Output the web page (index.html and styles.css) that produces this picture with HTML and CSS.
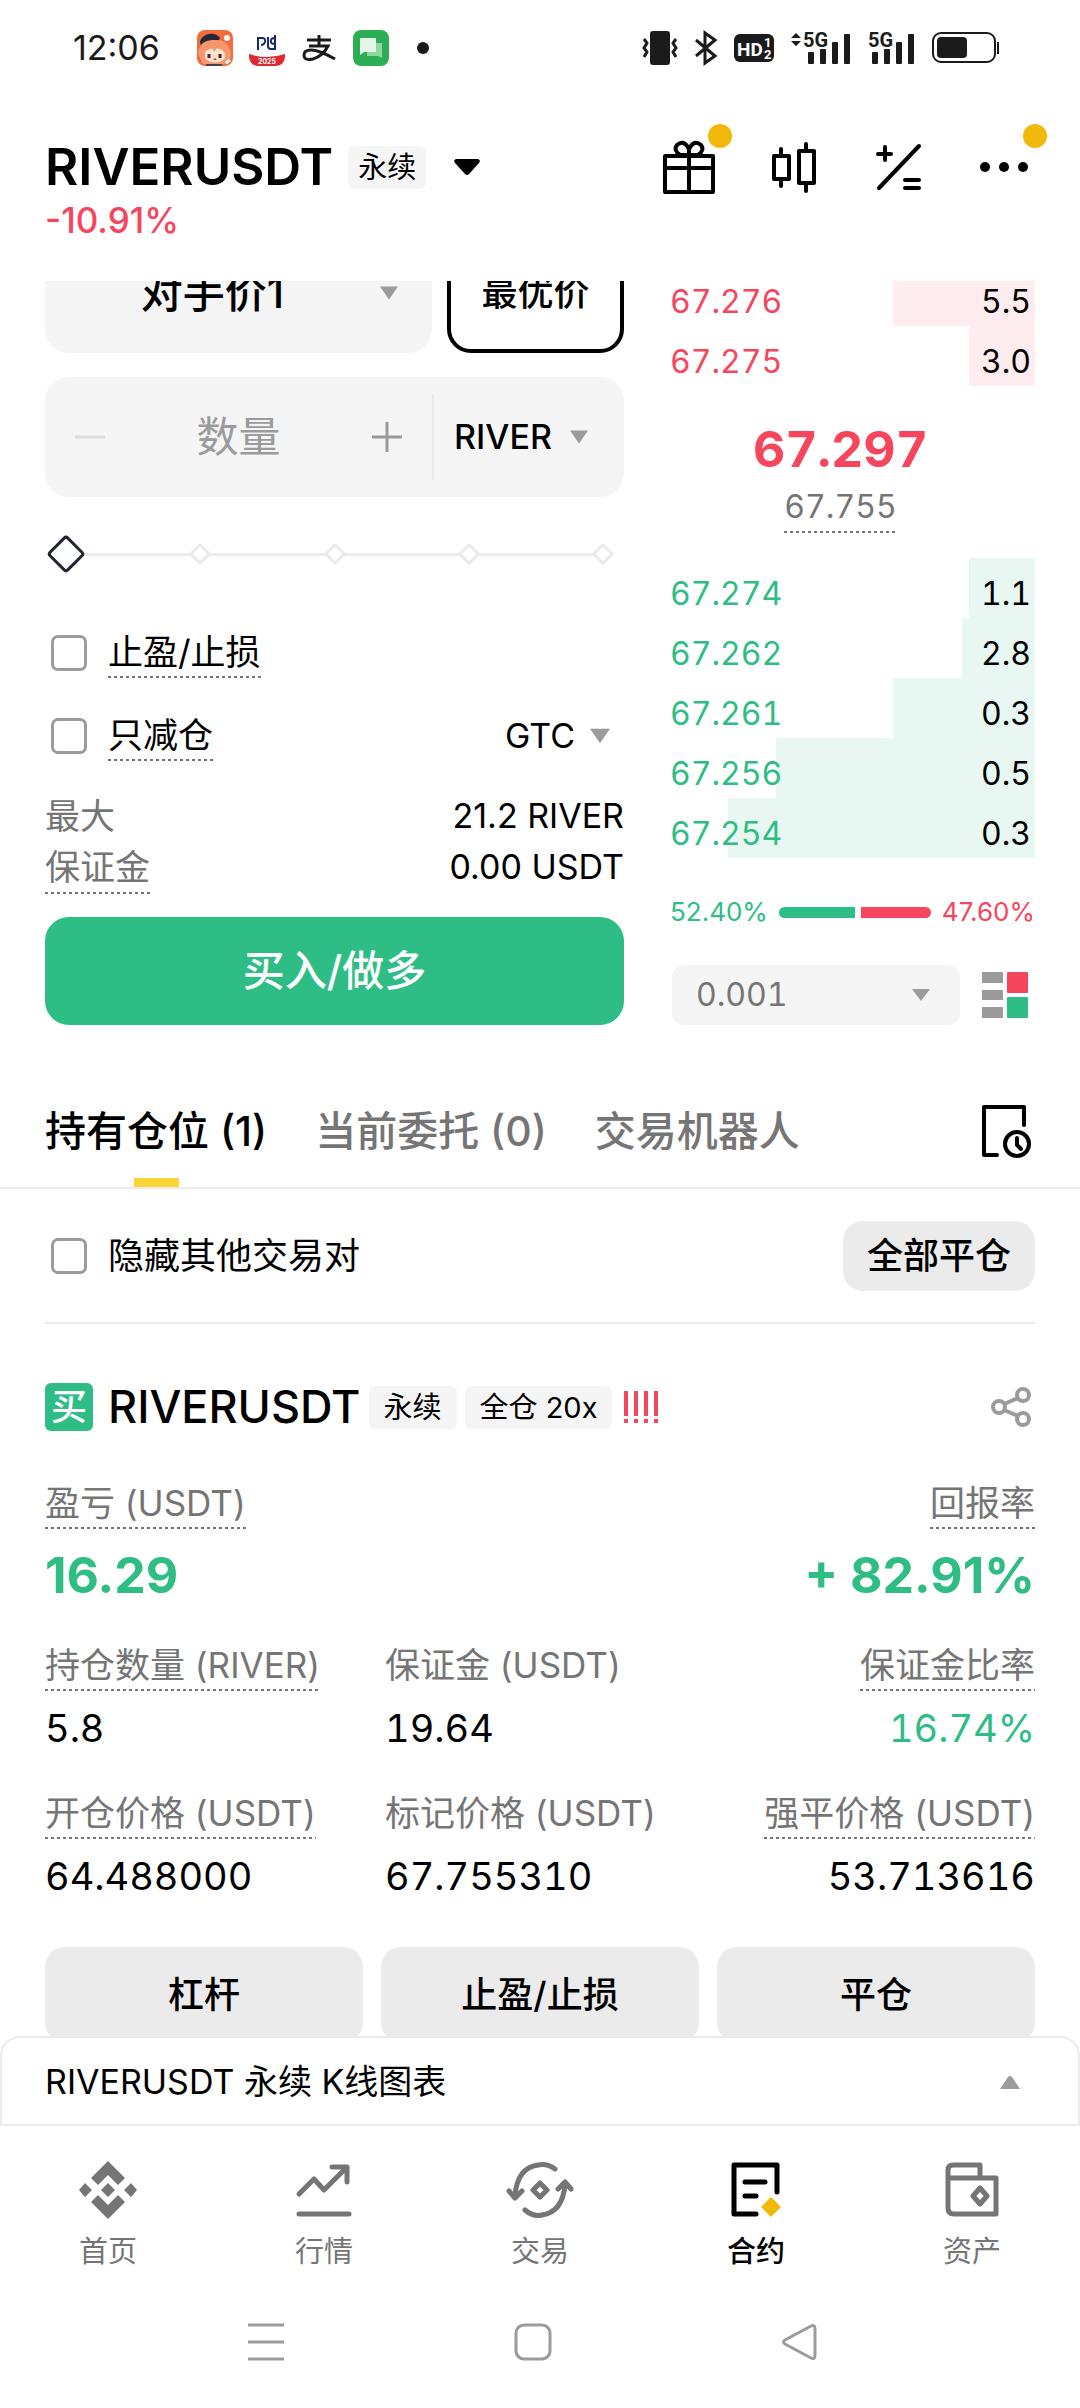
FILE: index.html
```html
<!DOCTYPE html>
<html lang="zh-CN">
<head>
  <meta charset="UTF-8">
  <meta name="viewport" content="width=device-width, initial-scale=1.0">
  <title>RIVERUSDT 永续</title>
  <link rel="stylesheet" href="styles.css">
</head>
<body>
  <div class="status-bar">
    <span class="clock">12:06</span>
    <div class="status-apps">
      <svg width="36" height="36" viewBox="0 0 36 36">
        <rect width="36" height="36" rx="8" fill="#f46b3c"/>
        <path d="M3 12C4 4 18 0 23 8L20 14L4 16Z" fill="#25283c"/>
        <circle cx="30" cy="8" r="3" fill="#fff"/>
        <path d="M1 24C2 12 10 10 18 10C28 9 34 16 34 26L30 34H6Z" fill="#f7976b"/>
        <path d="M8 22C12 17 24 17 28 22V28C24 34 12 34 8 28Z" fill="#fde3cf"/>
        <path d="M6 24L14 14L17 22L22 15L29 25L31 16L18 10L7 15Z" fill="#f7976b"/>
        <path d="M12 24v4M23 24v4" stroke="#4a2430" stroke-width="3"/>
        <path d="M16 30l2-2 2 2z" fill="#c43d38"/>
        <path d="M9 34h16v2H9z" fill="#45414b"/>
        <path d="M29 33l4-3" stroke="#fff" stroke-width="3"/>
      </svg>
      <svg width="36" height="36" viewBox="0 0 36 36">
        <path d="M9 20V8H13Q17 8 16 12Q15 15 12 15M19 7V16Q19 19 22 19H26V5M26 8Q21 8 22 12Q22 14 26 14" fill="none" stroke="#15296b" stroke-width="2"/>
        <path d="M0 24Q18 30 36 24V27Q35 36 26 36H10Q1 36 0 27Z" fill="#df2932"/>
        <text x="18" y="34" text-anchor="middle" font-size="7" font-weight="700" fill="#fff">2025</text>
      </svg>
      <svg width="36" height="36" viewBox="0 0 36 36" fill="none" stroke="#1b1b1b" stroke-width="3">
        <path d="M6 10H30M18 5V16M8 16H27Q22 26 12 29Q3 31 3 25Q3 20 10 20Q18 20 34 29"/>
      </svg>
      <svg width="36" height="36" viewBox="0 0 36 36">
        <rect width="36" height="36" rx="8" fill="#2cae54"/>
        <path d="M14 13H29V28L25 26H14Z" fill="#8fd6a3"/>
        <path d="M7 8H23V22H11L7 25Z" fill="#e2f5e6"/>
      </svg>
      <svg class="more-dot" width="12" height="12"><circle cx="6" cy="6" r="6" fill="#1b1b1b"/></svg>
    </div>
    <div class="status-system">
      <svg width="36" height="34" viewBox="0 0 36 34" fill="none" stroke="#1b1b1b" stroke-width="3">
        <rect x="8" y="0" width="20" height="34" rx="3" fill="#1b1b1b" stroke="none"/>
        <path d="M2 8l3 4-3 5 3 4-3 5M34 8l-3 4 3 5-3 4 3 5"/>
      </svg>
      <svg width="22" height="34" viewBox="0 0 22 34" fill="none" stroke="#1b1b1b" stroke-width="3">
        <path d="M1 9L20 25L10 32V2L20 9L1 25"/>
      </svg>
      <svg width="40" height="28" viewBox="0 0 40 28">
        <rect width="40" height="28" rx="6" fill="#1b1b1b"/>
        <text x="3" y="22" font-size="19" font-weight="700" font-family="Roboto" fill="#fff">HD</text>
        <text x="30" y="13" font-size="13" font-weight="700" font-family="Roboto" fill="#fff">1</text>
        <text x="30" y="25" font-size="13" font-weight="700" font-family="Roboto" fill="#fff">2</text>
      </svg>
      <svg width="60" height="33" viewBox="0 0 60 33" fill="#1b1b1b">
        <path d="M0 6L5 1L10 6ZM0 9H10L5 14Z"/>
        <text x="12" y="15" font-size="20" font-weight="700" font-family="Roboto">5G</text>
        <rect x="17" y="20" width="6" height="12" rx="1"/><rect x="29" y="17" width="6" height="15" rx="1"/>
        <rect x="41" y="10" width="6" height="22" rx="1"/><rect x="53" y="2" width="6" height="30" rx="1"/>
      </svg>
      <svg width="47" height="33" viewBox="0 0 47 33" fill="#1b1b1b">
        <text x="0" y="15" font-size="20" font-weight="700" font-family="Roboto">5G</text>
        <rect x="4" y="20" width="6" height="12" rx="1"/><rect x="16" y="17" width="6" height="15" rx="1"/>
        <rect x="28" y="10" width="6" height="22" rx="1"/><rect x="40" y="2" width="6" height="30" rx="1"/>
      </svg>
      <svg width="68" height="32" viewBox="0 0 68 32">
        <rect x="1" y="1" width="62" height="29" rx="8" fill="none" stroke="#1b1b1b" stroke-width="2"/>
        <rect x="5" y="5" width="30" height="21" rx="4" fill="#1b1b1b"/>
        <rect x="65" y="10" width="2" height="12" fill="#1b1b1b"/>
      </svg>
    </div>
  </div>

  <header class="header">
    <div>
      <div class="pair">
        <h1>RIVERUSDT</h1>
        <span class="tag">永续</span>
        <svg class="pair-caret" width="26" height="17" viewBox="0 0 26 17"><path d="M2 0H24Q27 1 25 4L15 15Q13 17 11 15L1 4Q-1 1 2 0Z"/></svg>
      </div>
      <div class="change">-10.91%</div>
    </div>
    <div class="header-icons">
      <button aria-label="礼物" class="dotted">
        <svg width="54" height="54" viewBox="0 0 54 54" fill="none" stroke="#000" stroke-width="4" stroke-linejoin="round">
          <rect x="3" y="16" width="48" height="36"/>
          <path d="M3 28H51M27 8V52M27 15H18Q11 10 15 5Q22 -1 27 9Q32 -1 39 5Q43 10 36 15H27"/>
        </svg>
      </button>
      <button aria-label="K线">
        <svg width="54" height="54" viewBox="0 0 54 54" fill="none" stroke="#000" stroke-width="4" stroke-linejoin="round" stroke-linecap="round">
          <rect x="7" y="16" width="15" height="23"/><rect x="32" y="11" width="15" height="32"/>
          <path d="M14 9V16M14 39V46M39 4V11M39 43V51"/>
        </svg>
      </button>
      <button aria-label="计算器">
        <svg width="54" height="54" viewBox="0 0 54 54" fill="none" stroke="#000" stroke-width="4" stroke-linecap="round">
          <path d="M6 14H19M13 7V20M7 48L47 6M33 40H47M33 48H47"/>
        </svg>
      </button>
      <button aria-label="更多" class="dotted">
        <svg width="54" height="54" viewBox="0 0 54 54">
          <circle cx="8" cy="27" r="5"/><circle cx="27" cy="27" r="5"/><circle cx="46" cy="27" r="5"/>
        </svg>
      </button>
    </div>
  </header>

  <main class="content">
    <section class="trade">
      <form class="order-form">
        <div class="price-row">
          <div class="select-box price-type">
            <select aria-label="价格类型"><option>对手价1</option></select>
            <svg class="caret" width="18" height="13" viewBox="0 0 18 13"><path d="M0 0H18L9 13Z"/></svg>
          </div>
          <button type="button" class="best-price">最优价</button>
        </div>
        <div class="amount">
          <button type="button" aria-label="减少"><svg width="30" height="30"><path d="M0 15H30" stroke="#dcdcdc" stroke-width="3"/></svg></button>
          <input type="text" placeholder="数量" aria-label="数量">
          <button type="button" aria-label="增加"><svg width="30" height="30"><path d="M0 15H30M15 0V30" stroke="#9b9b9b" stroke-width="3"/></svg></button>
          <div class="select-box unit">
            <select aria-label="单位"><option>RIVER</option></select>
            <svg class="caret" width="18" height="13" viewBox="0 0 18 13"><path d="M0 0H18L9 13Z"/></svg>
          </div>
        </div>
        <div class="slider">
          <span class="stop current"></span><span class="stop"></span><span class="stop"></span><span class="stop"></span><span class="stop"></span>
          <input type="range" min="0" max="100" step="25" value="0" aria-label="比例">
        </div>
        <div class="option">
          <input type="checkbox" id="tpsl"><label for="tpsl" class="hint">止盈/止损</label>
        </div>
        <div class="option">
          <input type="checkbox" id="reduce"><label for="reduce" class="hint">只减仓</label>
          <div class="select-box tif">
            <select aria-label="有效方式"><option>GTC</option></select>
            <svg class="caret" width="20" height="15" viewBox="0 0 18 13"><path d="M0 0H18L9 13Z"/></svg>
          </div>
        </div>
        <dl class="summary">
          <div><dt>最大</dt><dd>21.2 RIVER</dd></div>
          <div><dt class="hint">保证金</dt><dd>0.00 USDT</dd></div>
        </dl>
        <button type="button" class="buy-button">买入/做多</button>
      </form>

      <div class="book">
        <table class="asks">
          <tr style="--depth: 39%"><td>67.276</td><td>5.5</td></tr>
          <tr style="--depth: 18%"><td>67.275</td><td>3.0</td></tr>
        </table>
        <div class="last-price">
          <strong>67.297</strong>
          <span class="hint">67.755</span>
        </div>
        <table class="bids">
          <tr style="--depth: 18%"><td>67.274</td><td>1.1</td></tr>
          <tr style="--depth: 20%"><td>67.262</td><td>2.8</td></tr>
          <tr style="--depth: 39%"><td>67.261</td><td>0.3</td></tr>
          <tr style="--depth: 71%"><td>67.256</td><td>0.5</td></tr>
          <tr style="--depth: 84%"><td>67.254</td><td>0.3</td></tr>
        </table>
        <div class="ratio">
          <span class="green">52.40%</span>
          <span class="bar bar-buy" style="flex-grow: 52.4"></span>
          <span class="bar bar-sell" style="flex-grow: 47.6"></span>
          <span class="red">47.60%</span>
        </div>
        <div class="book-tools">
          <div class="select-box step">
            <select aria-label="深度"><option>0.001</option></select>
            <svg class="caret" width="18" height="12" viewBox="0 0 18 12"><path d="M0 0H18L9 12Z"/></svg>
          </div>
          <button type="button" aria-label="盘口样式">
            <svg width="46" height="46" viewBox="0 0 46 46">
              <path d="M0 0h21v11H0zM0 18h21v10H0zM0 35h21v11H0z" fill="#9b9b9b"/>
              <rect x="25" y="0" width="21" height="21" rx="1" fill="#f6465d"/>
              <rect x="25" y="25" width="21" height="21" rx="1" fill="#2ebd85"/>
            </svg>
          </button>
        </div>
      </div>
    </section>

    <nav class="tabs">
      <a href="#" class="active">持有仓位 (1)</a>
      <a href="#">当前委托 (0)</a>
      <a href="#">交易机器人</a>
      <button aria-label="历史记录">
        <svg width="50" height="54" viewBox="0 0 50 54" fill="none" stroke="#000" stroke-width="4" stroke-linecap="round" stroke-linejoin="round">
          <path d="M16 51H3V3H43V21"/><circle cx="36" cy="40" r="12"/><path d="M36 34V41L40 45"/>
        </svg>
      </button>
    </nav>

    <div class="filter">
      <input type="checkbox" id="hide-others"><label for="hide-others">隐藏其他交易对</label>
      <button class="grey-button close-all">全部平仓</button>
    </div>

    <section class="position">
      <div class="position-title">
        <span class="side">买</span>
        <h2>RIVERUSDT</h2>
        <span class="tag">永续</span>
        <span class="tag">全仓 20x</span>
        <svg class="risk" width="36" height="32" viewBox="0 0 36 32" fill="none" stroke="#f6465d" stroke-width="4">
          <path d="M2 0V25M12 0V25M22 0V25M32 0V25M2 28V32M12 28V32M22 28V32M32 28V32"/>
        </svg>
        <button class="share" aria-label="分享">
          <svg width="40" height="40" viewBox="0 0 40 40" fill="none" stroke="#9b9b9b" stroke-width="4">
            <circle cx="8" cy="20" r="6"/><circle cx="32" cy="8" r="6"/><circle cx="32" cy="32" r="6"/><path d="M13 17L27 11M13 23L27 29"/>
          </svg>
        </button>
      </div>
      <dl class="pnl">
        <div><dt><span class="hint">盈亏 (USDT)</span></dt><dd>16.29</dd></div>
        <div><dt><span class="hint">回报率</span></dt><dd>+ 82.91%</dd></div>
      </dl>
      <dl class="metrics">
        <div><dt><span class="hint">持仓数量 (RIVER)</span></dt><dd>5.8</dd></div>
        <div><dt>保证金 (USDT)</dt><dd>19.64</dd></div>
        <div><dt><span class="hint">保证金比率</span></dt><dd class="green">16.74%</dd></div>
        <div><dt><span class="hint">开仓价格 (USDT)</span></dt><dd>64.488000</dd></div>
        <div><dt>标记价格 (USDT)</dt><dd>67.755310</dd></div>
        <div><dt><span class="hint">强平价格 (USDT)</span></dt><dd>53.713616</dd></div>
      </dl>
      <div class="actions">
        <button class="grey-button">杠杆</button>
        <button class="grey-button">止盈/止损</button>
        <button class="grey-button">平仓</button>
      </div>
    </section>
  </main>

  <button class="chart-bar">
    <span>RIVERUSDT 永续 K线图表</span>
    <svg width="22" height="13" viewBox="0 0 22 13"><path d="M1 13H21L13 1Q11 -1 9 1Z" fill="#9b9b9b"/></svg>
  </button>

  <nav class="bottom-nav">
    <a href="#">
      <svg width="60" height="60" viewBox="0 0 60 60" fill="#757575">
        <path d="M30 1L47 18L40 25L30 15L20 25L13 18ZM30 59L47 42L40 35L30 45L20 35L13 42ZM30 23L37 30L30 37L23 30ZM7 23L14 30L7 37L1 30ZM53 23L59 30L53 37L46 30Z"/>
      </svg>
      首页
    </a>
    <a href="#">
      <svg width="60" height="60" viewBox="0 0 60 60" fill="none" stroke="#757575" stroke-width="5" stroke-linecap="round" stroke-linejoin="round">
        <path d="M5 34L20 19L30 30L52 8M38 7H53V22M5 54H55"/>
      </svg>
      行情
    </a>
    <a href="#">
      <svg width="68" height="60" viewBox="0 0 68 60" fill="none" stroke="#757575" stroke-width="5" stroke-linecap="round" stroke-linejoin="round">
        <path d="M49 9Q41 3 32 5Q11 8 9 36M3 31L9 38L16 31M19 50Q27 57 36 55Q57 52 59 24M52 29L59 22L65 29M34 23L41 30L34 37L27 30Z"/>
      </svg>
      交易
    </a>
    <a href="#" class="active">
      <svg width="60" height="60" viewBox="0 0 60 60" fill="none" stroke="#000" stroke-width="5" stroke-linecap="round" stroke-linejoin="round">
        <path d="M30 54H8V5H51V32M19 22H39M19 36H30"/>
        <path d="M45 37L55 47L45 57L35 47Z" fill="#f0b90b" stroke="none"/>
      </svg>
      合约
    </a>
    <a href="#">
      <svg width="60" height="60" viewBox="0 0 60 60" fill="none" stroke="#757575" stroke-width="5" stroke-linejoin="round">
        <path d="M6 18V10Q6 5 11 5H38V17M6 18H54V54H12Q6 54 6 48V18M38 28L45 36L38 44L31 36Z"/>
      </svg>
      资产
    </a>
  </nav>

  <div class="system-nav">
    <svg width="36" height="38" viewBox="0 0 36 38"><path d="M0 2H36M0 19H36M0 36H36"/></svg>
    <svg width="36" height="38" viewBox="0 0 36 38"><rect x="1" y="2" width="34" height="34" rx="8"/></svg>
    <svg width="36" height="38" viewBox="0 0 36 38"><path d="M30 3Q34 1 34 6V32Q34 37 30 35L4 21Q1 19 4 17Z"/></svg>
  </div>
</body>
</html>
```
FILE: styles.css
```css
* {
  box-sizing: border-box;
}

body {
  margin: 0;
  height: 100vh;
  display: flex;
  flex-direction: column;
  overflow: hidden;
  background-color: #fff;
  color: #000;
  font-family: Inter, "Noto Sans CJK SC", sans-serif;
  font-size: 34px;
  line-height: 48px;
}

h1, h2, dl, dd {
  margin: 0;
}

button, input, select {
  font: inherit;
  color: inherit;
  margin: 0;
  padding: 0;
  border: none;
  background: none;
}

a {
  color: inherit;
  text-decoration: none;
}

svg {
  display: block;
  flex-shrink: 0;
  overflow: visible;
}

.green {
  color: #2ebd85;
}

.red {
  color: #f6465d;
}

.hint {
  padding-bottom: 2px;
  background: repeating-linear-gradient(to right, #757575 0 3px, transparent 3px 6px) bottom / 100% 2px no-repeat;
}

.tag {
  padding: 0 15px;
  border-radius: 6px;
  background-color: #f5f5f5;
  font-size: 29px;
  line-height: 43px;
}

.grey-button {
  border-radius: 20px;
  background-color: #ebebeb;
  font-size: 36px;
  font-weight: 500;
}

input[type="checkbox"] {
  appearance: none;
  width: 36px;
  height: 36px;
  border: 3px solid #9b9b9b;
  border-radius: 7px;
}

/* drop-downs */
.select-box {
  position: relative;
}

.select-box select {
  appearance: none;
  width: 100%;
  height: 100%;
}

.caret {
  position: absolute;
  top: 50%;
  right: 30px;
  transform: translateY(-50%);
  fill: #9b9b9b;
  pointer-events: none;
}

/* status bar */
.status-bar {
  display: flex;
  align-items: center;
  height: 96px;
  padding: 0 80px 0 73px;
  color: #1b1b1b;
}

.clock {
  width: 124px;
}

.status-apps, .status-system {
  display: flex;
  align-items: center;
  gap: 16px;
}

.more-dot {
  margin-left: 12px;
}

.status-system {
  margin-left: auto;
  gap: 17px;
}

/* header */
.header {
  display: flex;
  justify-content: space-between;
  height: 185px;
  padding: 44px 49px 0 45px;
}

.pair {
  display: flex;
  align-items: center;
  height: 54px;
}

.pair h1 {
  font-size: 51px;
  font-weight: 600;
}

.pair .tag {
  margin-left: 15px;
  padding: 0 10px;
}

.pair-caret {
  margin-left: 28px;
}

.change {
  font-size: 35px;
  font-weight: 500;
  line-height: 52px;
  color: #f6465d;
}

.header-icons {
  display: flex;
  gap: 51px;
  height: 54px;
}

.header-icons button {
  position: relative;
}

.dotted::after {
  content: "";
  position: absolute;
  top: -16px;
  right: -16px;
  width: 24px;
  height: 24px;
  border-radius: 50%;
  background-color: #f0b90b;
}

/* page is scrolled a little under the header */
.content {
  flex: 1;
  min-height: 0;
  overflow: hidden;
}

.trade {
  display: flex;
  gap: 46px;
  margin-top: -48px;
  padding: 0 45px;
}

.order-form {
  flex: 579;
  min-width: 0;
}

.book {
  flex: 365;
  min-width: 0;
  font-size: 32px;
  font-variant-numeric: tabular-nums;
}

.price-row {
  display: flex;
  gap: 15px;
  height: 120px;
}

.price-type {
  flex: 1;
  border-radius: 24px;
  background-color: #f5f5f5;
  font-size: 42px;
  font-weight: 500;
}

.price-type select {
  padding-right: 52px;
  text-align-last: center;
}

.price-type .caret {
  right: 34px;
}

.best-price {
  width: 177px;
  border: 4px solid #000;
  border-radius: 24px;
  font-size: 36px;
  font-weight: 500;
}

.amount {
  display: flex;
  align-items: center;
  height: 120px;
  margin-top: 24px;
  padding-left: 30px;
  border-radius: 24px;
  background-color: #f5f5f5;
}

.amount input {
  flex: 1;
  min-width: 0;
  font-size: 42px;
  text-align: center;
}

.amount input::placeholder {
  color: #9b9b9b;
}

.unit {
  height: 86px;
  margin-left: 30px;
  border-left: 2px solid #ebebeb;
  font-weight: 500;
}

.unit select {
  padding: 0 72px 0 20px;
}

.unit .caret {
  right: 36px;
}

.slider {
  position: relative;
  display: flex;
  justify-content: space-between;
  align-items: center;
  height: 44px;
  margin: 35px 13px 0;
  background: linear-gradient(#ebebeb, #ebebeb) center / 100% 3px no-repeat;
}

.stop {
  width: 16px;
  height: 16px;
  border: 3px solid #ebebeb;
  border-radius: 2px;
  background-color: #fff;
  transform: rotate(45deg);
}

.stop.current {
  width: 28px;
  height: 28px;
  margin: 0 -6px;
  border-color: #202630;
  border-radius: 4px;
}

.slider input {
  position: absolute;
  inset: 0;
  width: 100%;
  opacity: 0;
}

.option {
  display: flex;
  align-items: center;
  height: 52px;
  margin-top: 51px;
  padding-left: 6px;
}

.option + .option {
  margin-top: 31px;
}

.option label, .filter label {
  margin-left: 21px;
  font-size: 36px;
}

.option label {
  font-size: 35px;
}

.tif {
  height: 48px;
  margin-left: auto;
}

.tif select {
  padding-right: 48px;
}

.tif .caret {
  right: 14px;
}

.summary {
  padding: 30px 0 23px;
}

.summary div {
  display: flex;
  justify-content: space-between;
  height: 51px;
}

.summary dt {
  color: #757575;
  font-size: 35px;
}

.buy-button {
  width: 100%;
  height: 108px;
  border-radius: 24px;
  background-color: #2ebd85;
  color: #fff;
  font-size: 42px;
  font-weight: 500;
}

/* order book */
.asks {
  margin-top: 33px;
}

.asks, .bids {
  width: 100%;
  border-collapse: collapse;
}

.asks tr {
  height: 60px;
  background: linear-gradient(to left, #feecef var(--depth), transparent 0);
}

.bids tr {
  height: 60px;
  background: linear-gradient(to left, #e8f7f2 var(--depth), transparent 0);
}

.book td {
  padding: 12px 4px 0 0;
}

.asks td:first-child {
  color: #f6465d;
}

.bids td:first-child {
  color: #2ebd85;
}

.book td:last-child {
  text-align: right;
}

.last-price {
  display: flex;
  flex-direction: column;
  align-items: center;
  height: 172px;
  padding: 35px 24px 0 0;
}

.last-price strong {
  color: #f6465d;
  font-size: 50px;
  line-height: 56px;
}

.last-price .hint {
  color: #757575;
  padding-top: 6px;
}

.ratio {
  display: flex;
  align-items: center;
  gap: 6px;
  height: 48px;
  margin-top: 30px;
  font-size: 26px;
  font-variant-numeric: normal;
}

.bar {
  flex: 1 1 0;
  height: 11px;
}

.bar-buy {
  margin-left: 5px;
  border-radius: 6px 0 0 6px;
  background-color: #2ebd85;
}

.bar-sell {
  margin-right: 5px;
  border-radius: 0 6px 6px 0;
  background-color: #f6465d;
}

.book-tools {
  display: flex;
  align-items: center;
  justify-content: space-between;
  margin-top: 29px;
  padding: 0 7px 0 2px;
}

.step {
  width: 288px;
  height: 60px;
  border-radius: 12px;
  background-color: #f5f5f5;
  color: #757575;
}

.step select {
  padding-left: 24px;
}

/* tabs */
.tabs {
  display: flex;
  align-items: center;
  gap: 48px;
  height: 114px;
  margin-top: 50px;
  padding: 0 49px 0 45px;
  border-bottom: 2px solid #ebebeb;
  color: #757575;
  font-size: 41px;
  font-weight: 500;
}

.tabs a {
  position: relative;
  line-height: 112px;
}

.tabs .active {
  color: #000;
}

.tabs .active::after {
  content: "";
  position: absolute;
  left: 50%;
  bottom: 0;
  width: 45px;
  height: 9px;
  margin-left: -22px;
  background-color: #fcd535;
}

.tabs button {
  margin-left: auto;
}

.filter {
  display: flex;
  align-items: center;
  height: 135px;
  margin: 0 45px;
  padding-left: 6px;
  border-bottom: 2px solid #ebebeb;
}

.close-all {
  height: 70px;
  margin-left: auto;
  padding: 0 24px;
}

/* position card */
.position {
  padding: 59px 45px 0;
}

.position-title {
  display: flex;
  align-items: center;
  height: 48px;
}

.side {
  width: 48px;
  border-radius: 6px;
  background-color: #2ebd85;
  color: #fff;
  font-size: 36px;
  font-weight: 500;
  text-align: center;
}

.position-title h2 {
  margin-left: 15px;
  font-size: 45px;
  font-weight: 500;
}

.position-title .tag {
  margin-left: 8px;
}

.risk {
  margin-left: 12px;
}

.share {
  margin-left: auto;
  margin-right: 4px;
}

.position dt {
  color: #757575;
  font-size: 35px;
}

.position dt .hint {
  display: inline-block;
}

.pnl {
  display: flex;
  justify-content: space-between;
  margin-top: 48px;
}

.pnl dd {
  color: #2ebd85;
  font-size: 50px;
  font-weight: 700;
  line-height: 92px;
}

.pnl div:last-child {
  text-align: right;
}

.metrics {
  display: grid;
  grid-template-columns: 34fr 32fr 33fr;
  row-gap: 24px;
  margin-top: 20px;
}

.metrics dt {
  height: 50px;
}

.metrics dd {
  font-size: 38px;
  font-variant-numeric: tabular-nums;
  line-height: 74px;
}

.metrics div:nth-child(3n) {
  text-align: right;
}

.actions {
  display: grid;
  grid-template-columns: repeat(3, 1fr);
  gap: 18px;
  margin-top: 34px;
}

.actions button {
  height: 96px;
}

/* bottom area */
.chart-bar {
  display: flex;
  justify-content: space-between;
  align-items: center;
  height: 90px;
  padding: 2px 57px 0 43px;
  border: 2px solid #ebebeb;
  border-radius: 20px 20px 0 0;
}

.bottom-nav {
  display: flex;
  height: 172px;
  padding-top: 34px;
  color: #757575;
  font-size: 29px;
  line-height: 64px;
}

.bottom-nav a {
  flex: 1;
  display: flex;
  flex-direction: column;
  align-items: center;
}

.bottom-nav .active {
  color: #000;
  font-weight: 500;
}

.system-nav {
  display: flex;
  justify-content: space-between;
  align-items: center;
  height: 110px;
  padding: 0 263px 22px 248px;
}

.system-nav svg {
  fill: none;
  stroke: #9b9b9b;
  stroke-width: 3;
}
```
